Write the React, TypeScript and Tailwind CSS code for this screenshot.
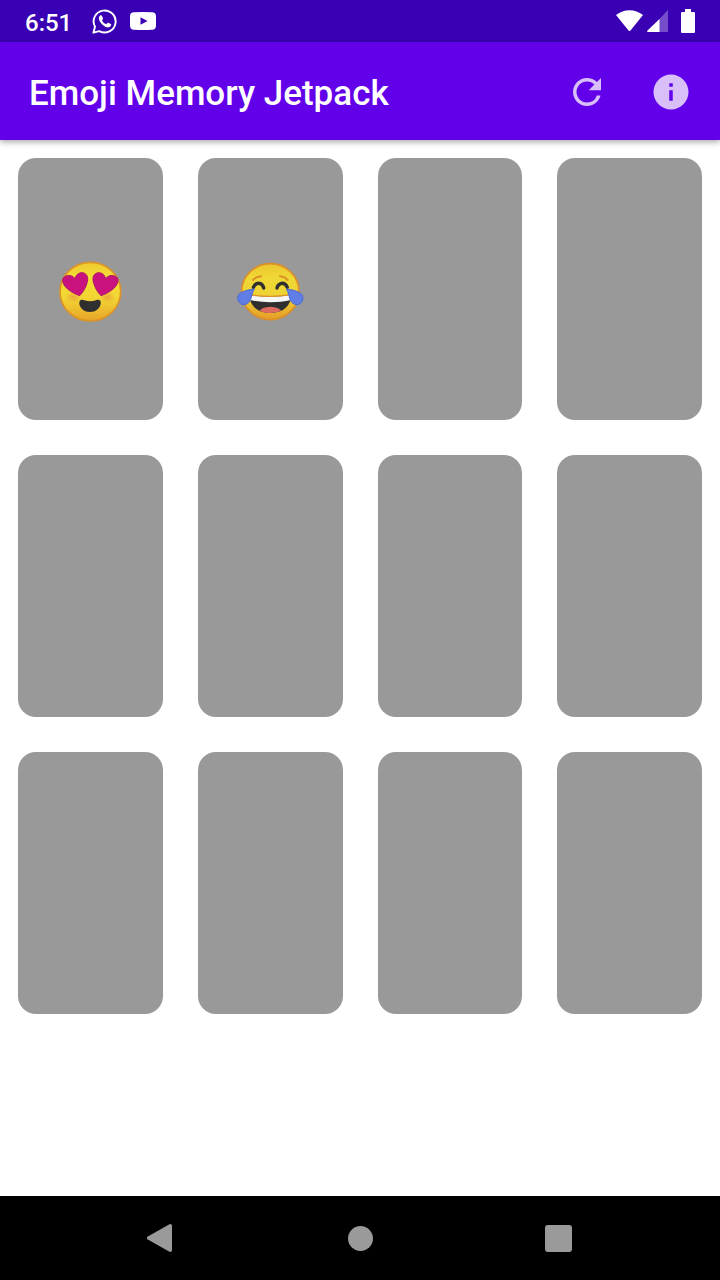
import { useState } from "react"
import { MdInfo, MdRefresh } from "react-icons/md"

function HeartEyes() {
  return (
    <svg viewBox="0 -3 300 270" className="h-[90px] w-[100px]" role="img" aria-label="Heart eyes">
      <defs>
        <linearGradient id="heartFace" x1="0" y1="0" x2="0" y2="1">
          <stop offset="0" stopColor="#efc92f" />
          <stop offset="0.25" stopColor="#f3dc35" />
          <stop offset="0.6" stopColor="#f2d634" />
          <stop offset="1" stopColor="#e8a428" />
        </linearGradient>
        <radialGradient id="cheek">
          <stop offset="0" stopColor="#e8813f" stopOpacity="0.55" />
          <stop offset="1" stopColor="#e8813f" stopOpacity="0" />
        </radialGradient>
      </defs>
      <ellipse cx="151" cy="140" rx="91" ry="88" fill="url(#heartFace)" stroke="#dd9425" strokeWidth="5" />
      <ellipse cx="100" cy="156" rx="24" ry="17" fill="url(#cheek)" />
      <ellipse cx="202" cy="156" rx="24" ry="17" fill="url(#cheek)" />
      <g fill="#c9127e" stroke="#ab1768" strokeWidth="3" strokeLinejoin="round">
        <path d="M119 152C105 147 82 136 73 121C64 107 67 94 82 92C93 90 101 95 105 101C107 91 116 82 127 83C142 85 146 98 141 114C137 130 127 144 119 152Z" />
        <path d="M183 152C197 147 220 136 229 121C238 107 235 94 220 92C209 90 201 95 197 101C195 91 186 82 175 83C160 85 156 98 161 114C165 130 175 144 183 152Z" />
      </g>
      <path
        d="M118 177C117 166 123 162 133 166C145 170 156 170 168 166C178 162 184 167 182 177C179 191 167 201 150 201C133 201 121 191 118 177Z"
        fill="#302f30"
      />
    </svg>
  )
}

function TearsOfJoy() {
  return (
    <svg viewBox="0 -3 300 270" className="h-[90px] w-[100px]" role="img" aria-label="Tears of joy">
      <defs>
        <linearGradient id="joyFace" x1="0" y1="0" x2="0" y2="1">
          <stop offset="0" stopColor="#ecc52f" />
          <stop offset="0.25" stopColor="#efd835" />
          <stop offset="0.6" stopColor="#eed234" />
          <stop offset="1" stopColor="#e59b28" />
        </linearGradient>
        <clipPath id="mouth">
          <path d="M89 149C125 157 177 157 213 149C214 182 190 204 151 204C112 204 88 182 89 149Z" />
        </clipPath>
      </defs>
      <ellipse cx="151" cy="140" rx="86" ry="84" fill="url(#joyFace)" stroke="#dc9026" strokeWidth="5" />
      <g fill="none" stroke="#dc9026" strokeWidth="6" strokeLinecap="round">
        <path d="M99 105C104 99 113 95 123 94" />
        <path d="M180 94C190 95 198 99 203 105" />
      </g>
      <g fill="none" stroke="#302f30" strokeWidth="10" strokeLinecap="round">
        <path d="M100 127C104 117 112 114 119 115C126 117 130 122 131 129" />
        <path d="M171 129C172 122 177 117 184 115C192 114 198 118 202 127" />
      </g>
      <g clipPath="url(#mouth)">
        <rect x="85" y="140" width="132" height="70" fill="#302f30" />
        <path d="M85 145H217V164C178 174 124 174 85 164Z" fill="#f6f6f6" />
        <ellipse cx="151" cy="201" rx="33" ry="16" fill="#dc6a60" />
      </g>
      <path d="M89 149C125 155 177 155 213 149" fill="none" stroke="#dc9026" strokeWidth="4" />
      <g fill="#617ee6" stroke="#4a69d6" strokeWidth="3" strokeLinejoin="round">
        <path d="M103 132C87 134 66 138 57 148C49 158 54 174 66 178C79 181 88 174 92 163C95 153 97 141 103 132Z" />
        <path d="M199 132C215 134 236 138 245 148C253 158 248 174 236 178C223 181 214 174 210 163C207 153 205 141 199 132Z" />
      </g>
    </svg>
  )
}

function StatusBar() {
  return (
    <div className="flex h-[42px] items-center bg-[#3a00b3] px-[25px] text-white">
      <span className="pt-[3px] text-2xl font-medium">6:51</span>
      <svg viewBox="0 0 25 25" className="ml-5 size-[25px]" role="img" aria-label="WhatsApp">
        <path
          d="M1.400 23.700L3 17.800A11 11 0 1 1 7.300 22.100Z"
          fill="none"
          stroke="currentColor"
          strokeWidth="1.900"
          strokeLinejoin="round"
        />
        <path
          d="M8.300 6.300Q9.300 5.800 9.900 6.800L11 9.300Q11.200 9.900 10.800 10.400L9.900 11.500Q11.400 14.200 14.200 15.200L15.400 13.900Q15.800 13.500 16.300 13.700L18.800 14.900Q19.400 15.300 19.200 16Q18.500 18.300 16.100 18.500Q13.200 18.500 9.900 15.300Q6.900 12.100 6.800 9.400Q6.900 7.200 8.300 6.300Z"
          fill="currentColor"
        />
      </svg>
      <svg viewBox="0 0 26 18" className="ml-[13px] h-[18px] w-[26px]" role="img" aria-label="YouTube">
        <path
          d="M4 .3Q13-.3 22 .3Q26 .3 26 4.500V13.500Q26 17.700 22 17.700Q13 18.300 4 17.700Q0 17.700 0 13.500V4.500Q0 .3 4 .3ZM10.500 5.300V12.700L17.500 9Z"
          fill="currentColor"
          fillRule="evenodd"
        />
      </svg>
      <svg viewBox="0 0 27 22" className="ml-auto h-[22px] w-[27px]" role="img" aria-label="Wi-Fi">
        <path d="M0 5C8-1.500 19-1.500 27 5L14.500 20.500Q13.500 21.500 12.500 20.500Z" fill="currentColor" />
      </svg>
      <svg viewBox="0 0 21 22" className="ml-1 h-[22px] w-[21px]" role="img" aria-label="Mobile signal">
        <path d="M21 0V22H0Z" fill="currentColor" fillOpacity="0.3" />
        <path d="M12.500 9V22H1Q-.5 21.500 .5 20.500Z" fill="currentColor" />
      </svg>
      <svg viewBox="0 0 14 24" className="ml-[13px] h-6 w-[14px]" role="img" aria-label="Battery">
        <path d="M4 0H10V3H13Q14 3 14 4V23Q14 24 13 24H1Q0 24 0 23V4Q0 3 1 3H4Z" fill="currentColor" />
      </svg>
    </div>
  )
}

function NavBar() {
  return (
    <nav className="flex h-[84px] bg-black px-[63px] text-[#9a9a9a]">
      <button aria-label="Back" className="flex flex-1 items-center justify-center">
        <svg viewBox="0 0 30 30" className="size-[30px]">
          <path d="M.4 13.800Q-1.500 15 .4 16.200L22 28.600Q25 30 25 27V3Q25 0 22 1.400Z" fill="currentColor" />
        </svg>
      </button>
      <button aria-label="Home" className="flex flex-1 items-center justify-center">
        <span className="size-[25px] rounded-full bg-current" />
      </button>
      <button aria-label="Overview" className="flex flex-1 items-center justify-center">
        <span className="size-[27px] rounded-[3px] bg-current" />
      </button>
    </nav>
  )
}

const faces = [HeartEyes, TearsOfJoy]
const cards = Array.from({ length: 12 }, (_, i) => i % 2)

export default function App() {
  const [open, setOpen] = useState<number[]>([0, 1])

  const flip = (index: number) => {
    setOpen((prev) => (prev.includes(index) ? prev.filter((i) => i !== index) : [...prev, index]))
  }

  return (
    <div className="flex min-h-screen flex-col bg-white font-['Roboto',sans-serif]">
      <StatusBar />

      {/* App bar */}
      <header className="flex h-[98px] items-center bg-[#6200ea] pt-[2px] pr-[7px] pl-[29px] shadow-[0_2px_6px_rgba(0,0,0,0.35)]">
        <h1 className="flex-1 pt-[3px] text-[35px] leading-[42px] font-medium text-white">Emoji Memory Jetpack</h1>
        <button
          aria-label="Restart"
          onClick={() => setOpen([])}
          className="flex size-[84px] items-center justify-center text-[#d8bffa]"
        >
          <MdRefresh className="size-[42px]" />
        </button>
        <button aria-label="About" className="flex size-[84px] items-center justify-center text-[#d8bffa]">
          <MdInfo className="size-[42px]" />
        </button>
      </header>

      {/* Board */}
      <main className="grid flex-1 grid-cols-4 content-start gap-[35px] p-[18px]">
        {cards.map((face, index) => {
          const Face = faces[face]
          return (
            <button
              key={index}
              aria-label={`Card ${index + 1}`}
              onClick={() => flip(index)}
              className="flex h-[262px] items-center justify-center rounded-[18px] bg-[#999999]"
            >
              {open.includes(index) && <Face />}
            </button>
          )
        })}
      </main>

      <NavBar />
    </div>
  )
}
